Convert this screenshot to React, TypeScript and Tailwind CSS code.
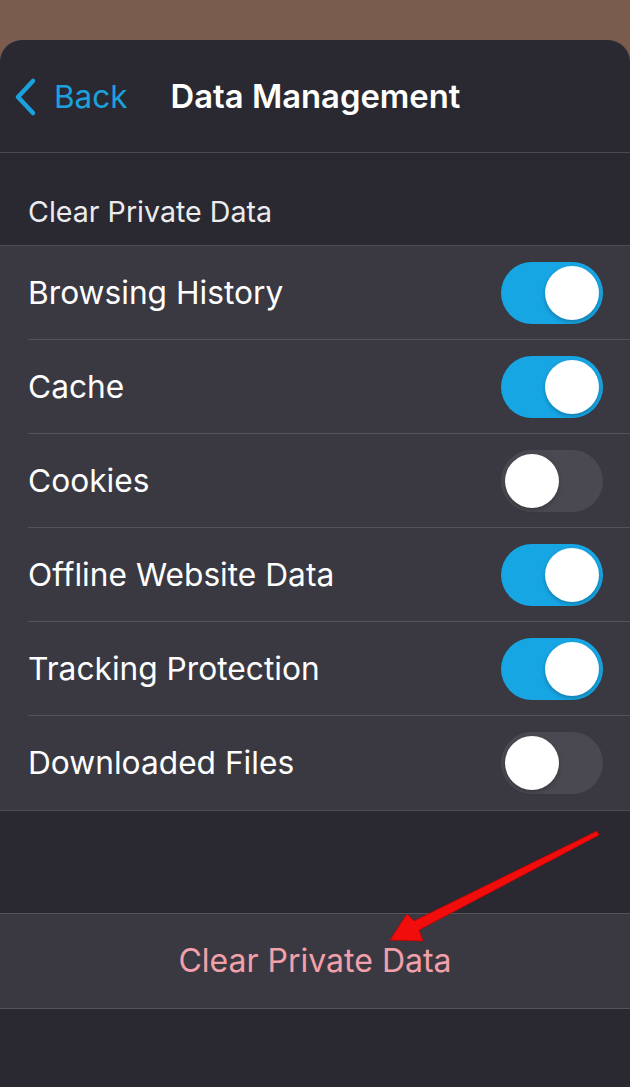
import React from "react";

const rows = [
  { label: "Browsing History", on: true },
  { label: "Cache", on: true },
  { label: "Cookies", on: false },
  { label: "Offline Website Data", on: true },
  { label: "Tracking Protection", on: true },
  { label: "Downloaded Files", on: false },
];

function Toggle({ on }: { on: boolean }) {
  return (
    <div
      className={
        "flex h-[62px] w-[102px] items-center rounded-full px-[4px] " +
        (on ? "justify-end bg-[#17a6e4]" : "justify-start bg-[#4a4951]")
      }
    >
      <div className="h-[54px] w-[54px] rounded-full bg-white shadow-[0_2px_4px_rgba(0,0,0,0.25)]" />
    </div>
  );
}

export default function App() {
  return (
    <div
      className="relative min-h-[1087px] bg-gradient-to-b from-[#7a5c4e] to-[#86675a] pt-[40px]"
      style={{ fontFamily: "Inter, 'Noto Sans', sans-serif" }}
    >
      <div className="min-h-[1047px] overflow-hidden rounded-t-[22px] bg-[#2a2931] text-white">
        {/* header */}
        <div className="flex h-[113px] items-center border-b border-[#4b4a52] pl-[12px] pt-[2px]">
          <svg width="26" height="40" viewBox="0 0 26 40" className="mr-[16px]">
            <path
              d="M21 4 L6 20 L21 36"
              fill="none"
              stroke="#1ba2de"
              strokeWidth="4.5"
              strokeLinecap="round"
              strokeLinejoin="round"
            />
          </svg>
          <span className="text-[31.5px] text-[#1ba2de]">Back</span>
          <span className="ml-[43px] text-[32.8px] font-semibold">Data Management</span>
        </div>

        {/* section header */}
        <div className="flex h-[93px] items-center border-b border-[#4b4a52] pl-[28px] pt-[27px] text-[28.6px] text-[#ececef]">
          Clear Private Data
        </div>

        {/* rows */}
        <div className="bg-[#3a3942]">
          {rows.map((r, i) => (
            <div key={r.label} className="pl-[28px]">
              <div
                className={
                  "flex h-[94px] items-center justify-between pr-[27px] " +
                  (i < rows.length - 1 ? "border-b border-[#55545c]" : "")
                }
              >
                <span className="text-[31.7px] text-white">{r.label}</span>
                <Toggle on={r.on} />
              </div>
            </div>
          ))}
        </div>

        <div className="h-[103px] border-t border-[#4b4a52]" />

        <div className="flex h-[96px] items-center justify-center border-y border-[#55545c] bg-[#3a3942]">
          <span className="text-[32px] text-[#f2a0aa]">Clear Private Data</span>
        </div>
      </div>

      {/* annotation arrow */}
      <svg
        className="pointer-events-none absolute left-0 top-0"
        width="630"
        height="1087"
        viewBox="0 0 630 1087"
      >
        <polygon
          points="390,940 407,914 414,921 597,831 599,835 419,930 423,941"
          fill="#f20d0d"
          stroke="#c80000"
          strokeWidth="0.8"
          strokeLinejoin="round"
        />
      </svg>
    </div>
  );
}
